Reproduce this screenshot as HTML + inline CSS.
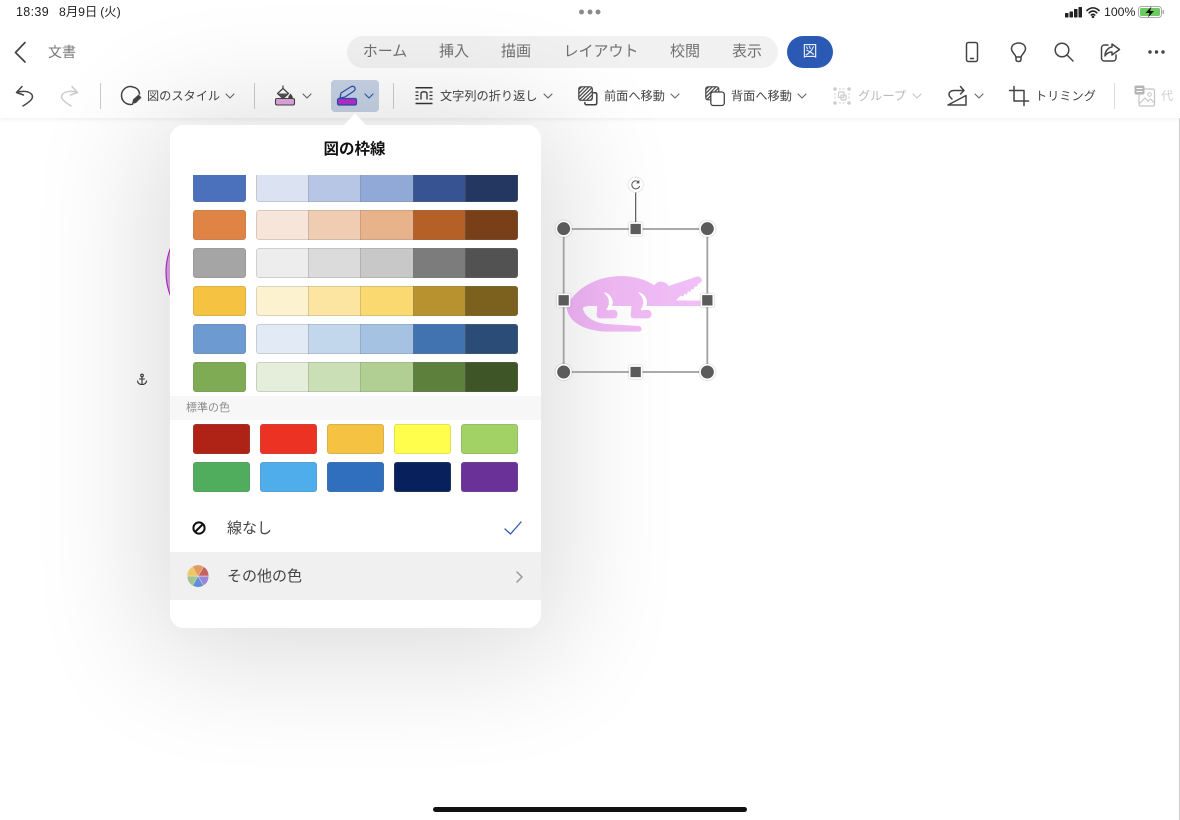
<!DOCTYPE html>
<html><head><meta charset="utf-8">
<style>
html,body{margin:0;padding:0;width:1180px;height:820px;overflow:hidden;background:#fff}
*{box-sizing:border-box}
body{font-family:"Liberation Sans","Noto Sans CJK JP",sans-serif;position:relative;color:#444}
.a{position:absolute;white-space:nowrap}
.t{position:absolute;white-space:nowrap;font-size:12.2px;line-height:16px;color:#454545;top:88px}
.tab{position:absolute;top:43px;font-size:15px;line-height:18px;color:#707070;transform:translateX(-50%);white-space:nowrap}
svg{position:absolute;overflow:visible}
.sw{position:absolute;border-radius:3px;box-shadow:inset 0 0 0 1px rgba(120,120,120,.22)}
.st{position:absolute;left:256px;width:262px;height:30px;display:flex;border-radius:3px;overflow:hidden}
.st:after{content:"";position:absolute;left:0;top:0;right:0;bottom:0;border-radius:3px;box-shadow:inset 0 0 0 1px rgba(120,120,120,.25)}
.st i{flex:1;display:block;border-left:1px solid rgba(120,120,120,.28)}
.st i:first-child{border-left:0}
.s{fill:none;stroke:#444;stroke-width:1.5;stroke-linecap:round;stroke-linejoin:round}
.d{fill:none;stroke:#666;stroke-width:1.1;stroke-linecap:round;stroke-linejoin:round}
</style></head><body>

<!-- document content -->
<svg style="left:0;top:0" width="1180" height="820"><circle cx="231" cy="272" r="65" fill="#dfa6e2" stroke="#b92bd6" stroke-width="1.2"/>
<g fill="none" stroke="#333" stroke-width="1.1" stroke-linecap="round"><circle cx="142" cy="375.5" r="1.3"/><path d="M142 377V384.5M139.5 379H144.5M137.5 381C138 383.5 140 384.500 142 384.500C144 384.500 146 383.500 146.500 381"/></g></svg>
<div class="a" style="left:1179px;top:118px;width:1px;height:702px;background:#ccc"></div>

<!-- top bars -->
<div class="a" style="left:0;top:0;width:1180px;height:118px;background:#fff;box-shadow:0 1px 5px rgba(0,0,0,.07)"></div>

<div class="a" style="left:16px;top:4px;font-size:12.500px;line-height:16px;color:#222;letter-spacing:.35px">18:39</div>
<div class="a" style="left:59px;top:4px;font-size:12.300px;line-height:16px;color:#222;word-spacing:-.5px">8月9日 (火)</div>
<svg style="left:579px;top:9px" width="22" height="6" fill="#8b8b8b"><circle cx="2.500" cy="3" r="2.500"/><circle cx="11" cy="3" r="2.500"/><circle cx="19" cy="3" r="2.500"/></svg>
<svg style="left:1064px;top:6px" width="20" height="12" fill="#222"><rect x="1" y="7" width="3.500" height="4.500" rx=".6"/><rect x="5.500" y="5.500" width="3.500" height="6" rx=".6"/><rect x="10" y="3" width="3.500" height="8.500" rx=".6"/><rect x="14.500" y="1" width="3.500" height="10.500" rx=".6"/></svg>
<svg style="left:1086px;top:6px" width="14" height="12" fill="none" stroke="#222" stroke-width="1.600" stroke-linecap="round"><path d="M1 4.500C4.500 1 9.500 1 13 4.500M3.200 6.800C5.500 4.500 8.500 4.500 10.800 6.800M5.300 9C6.300 8 7.700 8 8.700 9"/><circle cx="7" cy="10.800" r=".5" fill="#222"/></svg>
<div class="a" style="left:1104px;top:4px;font-size:12.300px;line-height:16px;color:#222">100%</div>
<svg style="left:1138px;top:5px" width="28" height="14"><rect x=".5" y="1.500" width="23" height="11" rx="3" fill="none" stroke="#aaa"/><rect x="2" y="3" width="20" height="8" rx="1.500" fill="#6ccb60"/><rect x="24.500" y="5" width="1.500" height="4" rx=".7" fill="#aaa"/><path d="M13.500 1.500L7.500 8H11.500L10 12.500L16 6H12Z" fill="#111"/></svg>

<svg style="left:14px;top:41px" width="14" height="22" fill="none" stroke="#444" stroke-width="1.700" stroke-linecap="round" stroke-linejoin="round"><path d="M11 1.500L1.500 11.500L11 21"/></svg>
<div class="a" style="left:48px;top:43px;font-size:14px;line-height:18px;color:#777">文書</div>

<div class="a" style="left:347px;top:36px;width:431px;height:32px;border-radius:16px;background:#f1f1f1"></div>
<div class="tab" style="left:385px">ホーム</div>
<div class="tab" style="left:454px">挿入</div>
<div class="tab" style="left:516px">描画</div>
<div class="tab" style="left:601px">レイアウト</div>
<div class="tab" style="left:685px">校閲</div>
<div class="tab" style="left:747px">表示</div>
<div class="a" style="left:787px;top:36px;width:46px;height:32px;border-radius:16px;background:#2b5ab5"></div>
<div class="tab" style="left:810px;color:#e8eefa">図</div>

<!-- right icons -->
<svg style="left:964px;top:40px" width="16" height="22"><rect class="s" x="2.500" y="2.500" width="11" height="19" rx="2"/><path class="s" d="M6.500 18.500H9.500"/></svg>
<svg style="left:1009px;top:41px" width="20" height="22"><path class="s" d="M6.800 16C6.500 13 2.500 11.500 2.500 7.800C2.500 4.300 5.500 2 9.500 2C13.500 2 16.500 4.300 16.500 7.800C16.500 11.500 12.500 13 12.200 16ZM7 16V18.500C7 19.800 8 20.500 9.500 20.500C11 20.500 12 19.800 12 18.500V16"/></svg>
<svg style="left:1054px;top:42px" width="20" height="20"><circle class="s" cx="8" cy="8" r="6.800"/><path class="s" d="M13 13L19 19"/></svg>
<svg style="left:1100px;top:42px" width="20" height="20"><path class="s" d="M8 3H4.500C2.800 3 1.500 4.300 1.500 6V16C1.500 17.700 2.800 19 4.500 19H13C14.700 19 16 17.700 16 16V13"/><path class="s" d="M12 2L19.500 7.500L12 13V10C8.500 10 6.500 11.500 5 14C5 9.500 8 5.500 12 5Z"/></svg>
<svg style="left:1148px;top:49px" width="17" height="6" fill="#444"><circle cx="2" cy="3" r="1.700"/><circle cx="8.500" cy="3" r="1.700"/><circle cx="15" cy="3" r="1.700"/></svg>

<!-- toolbar -->
<svg style="left:14px;top:85px" width="20" height="22"><path class="s" d="M8 1.500L2.500 7.500L9.500 10M2.500 7.500C8 5.500 15 6 17.800 9.500C20 13 17 16 9 21"/></svg>
<svg style="left:60px;top:85px" width="20" height="22"><path d="M12 1.500L17.500 7.500L10.500 10M17.500 7.500C12 5.500 5 6 2.200 9.500C0 13 3 16 11 21" fill="none" stroke="#ccc" stroke-width="1.500" stroke-linecap="round" stroke-linejoin="round"/></svg>
<div class="a" style="left:100px;top:83px;width:1px;height:26px;background:#ccc"></div>

<svg style="left:120px;top:85px" width="24" height="24"><path class="s" d="M14 2.500C12.800 1.700 11.500 1.500 10.500 1.500C5.500 1.500 1.500 5.500 1.500 10.500C1.500 15.500 5.500 19.500 10.500 19.500C11.300 19.500 12 19.400 12.500 19.300"/><path class="s" d="M15 2.500C17.800 4 19.500 6.500 19.500 9"/><path d="M12 19L13 14.500L18.500 9.500L21.500 12.500L16 18Z" fill="#444"/></svg>
<div class="t" style="left:147px">図のスタイル</div>
<svg style="left:225px;top:93px" width="10" height="6"><path class="d" d="M1 1L5 5L9 1"/></svg>
<div class="a" style="left:254px;top:83px;width:1px;height:26px;background:#ccc"></div>

<svg style="left:274px;top:84px" width="24" height="24"><path d="M9 1.500V5M3.500 9.500L9 4.500L14.500 9.500L9 14.500Z" fill="#fff" stroke="#444" stroke-width="1.200" stroke-linejoin="round"/><path d="M4 9.500H14L9 14Z" fill="#555"/><path d="M16.500 9.500C18 11.500 18.800 12.500 18.800 13.500C18.800 14.600 17.800 15.500 16.500 15.500C15.300 15.500 14.300 14.600 14.300 13.500C14.300 12.500 15 11.500 16.500 9.500Z" fill="#444"/><rect x="1.500" y="14.500" width="19" height="6.500" rx="1.500" fill="#e2a9e2" stroke="#444" stroke-width="1.100"/></svg>
<svg style="left:302px;top:93px" width="10" height="6"><path class="d" d="M1 1L5 5L9 1"/></svg>

<div class="a" style="left:331px;top:80px;width:48px;height:32px;border-radius:4px;background:#c7d3e5"></div>
<svg style="left:336px;top:84px" width="24" height="22"><path d="M4 14L5 9L14.500 3C16 2 18 2 18.800 3.500C19.500 5 19 6 18 7L9 13Z" fill="none" stroke="#2b52ab" stroke-width="1.300" stroke-linejoin="round"/><rect x="1.500" y="14.500" width="19" height="6.500" rx="1.500" fill="#b92bd0" stroke="#2b52ab" stroke-width="1.200"/></svg>
<svg style="left:364px;top:93px" width="10" height="6"><path d="M1 1L5 5L9 1" fill="none" stroke="#2b5ab5" stroke-width="1.200" stroke-linecap="round" stroke-linejoin="round"/></svg>
<div class="a" style="left:393px;top:83px;width:1px;height:26px;background:#ccc"></div>

<svg style="left:415px;top:87px" width="18" height="18"><path d="M.5 .800H17.500M.5 16.500H17.500" stroke="#333" stroke-width="1.500" fill="none"/><path d="M.5 5H3.500M.5 8.500H3.500M.5 12H3.500M14.500 5H17.500M14.500 8.500H17.500M14.500 12H17.500" stroke="#333" stroke-width="1.200" fill="none"/><path d="M6 12.500V6.500C6 5.500 6.800 4.800 8.800 4.800C11 4.800 12 5.500 12 6.500V12.500" stroke="#333" stroke-width="1.300" fill="none"/></svg>
<div class="t" style="left:440px">文字列の折り返し</div>
<svg style="left:543px;top:93px" width="10" height="6"><path class="d" d="M1 1L5 5L9 1"/></svg>

<svg style="left:578px;top:86px" width="20" height="20"><defs><pattern id="h" width="2.600" height="2.600" patternUnits="userSpaceOnUse" patternTransform="rotate(-45)"><rect width="2.600" height="1.200" fill="#444"/></pattern></defs><rect x=".8" y=".8" width="13.500" height="13.500" rx="2" fill="url(#h)" stroke="#444" stroke-width="1.200"/><path class="s" d="M15.500 6.800H17C18.100 6.800 18.800 7.500 18.800 8.600V16.800C18.800 18 18 18.800 16.800 18.800H8.500C7.500 18.800 6.800 18 6.800 16.500"/></svg>
<div class="t" style="left:604px">前面へ移動</div>
<svg style="left:670px;top:93px" width="10" height="6"><path class="d" d="M1 1L5 5L9 1"/></svg>

<svg style="left:705px;top:86px" width="20" height="20"><rect x=".8" y=".8" width="13" height="13" rx="2" fill="url(#h)" stroke="#444" stroke-width="1.200"/><rect x="5.800" y="6" width="13.500" height="13.500" rx="2.500" fill="#fff" stroke="#444" stroke-width="1.300"/></svg>
<div class="t" style="left:731px">背面へ移動</div>
<svg style="left:797px;top:93px" width="10" height="6"><path class="d" d="M1 1L5 5L9 1"/></svg>

<svg style="left:833px;top:87px" width="18" height="18"><g fill="#ccc"><circle cx="2" cy="2" r="1.800"/><circle cx="16" cy="2" r="1.800"/><circle cx="2" cy="16" r="1.800"/><circle cx="16" cy="16" r="1.800"/></g><path d="M6 2H12M6 16H12M2 6V12M16 6V12" stroke="#ccc" stroke-dasharray="2 1.500" fill="none"/><rect x="5.500" y="5" width="5.500" height="5.500" rx="1" fill="none" stroke="#ccc" stroke-width="1.200"/><rect x="8" y="8" width="5" height="5" rx="1" fill="none" stroke="#ccc" stroke-width="1.200"/></svg>
<div class="t" style="left:858px;color:#b9b9b9">グループ</div>
<svg style="left:912px;top:93px" width="10" height="6"><path d="M1 1L5 5L9 1" fill="none" stroke="#c4c4c4" stroke-width="1.100" stroke-linecap="round" stroke-linejoin="round"/></svg>

<svg style="left:947px;top:84px" width="22" height="22"><path class="s" d="M1 21H19V11.500L1 21Z"/><path class="s" d="M17 6.500H7C4 6.500 2 8 2 10.500C2 12.500 3.500 13.500 5 15M13.500 2.500L17 6.500L13.500 10"/></svg>
<svg style="left:974px;top:93px" width="10" height="6"><path class="d" d="M1 1L5 5L9 1"/></svg>

<svg style="left:1009px;top:86px" width="20" height="20"><path class="s" d="M5 0.500V15H19.500M0.500 4.500H15V19.500"/></svg>
<div class="t" style="left:1035px">トリミング</div>
<div class="a" style="left:1114px;top:83px;width:1px;height:26px;background:#ddd"></div>
<svg style="left:1134px;top:85px" width="22" height="22"><rect x="5" y="4" width="15.500" height="17" rx="1.500" fill="#fff" stroke="#c4c4c4" stroke-width="1.200"/><circle cx="15.500" cy="9.500" r="1.800" fill="none" stroke="#c4c4c4"/><path d="M5.500 18.500L11 13L15 17M14 16L16.500 14L20 17.500" fill="none" stroke="#c4c4c4"/><rect x=".5" y=".5" width="10" height="9" rx="1.500" fill="#b5b5b5"/><path d="M2.500 3.500H8.500M2.500 6.500H8.500" stroke="#fff"/></svg>
<div class="t" style="left:1161px;color:#d0d0d0">代</div>

<!-- popover shadow -->
<div class="a" style="left:170px;top:125px;width:371px;height:503px;border-radius:14px;box-shadow:0 10px 120px 20px rgba(0,0,0,.14)"></div>
<svg style="left:340px;top:112px" width="30" height="14"><path d="M3 14L15 1.500L27 14Z" fill="#fff"/></svg>

<!-- shape selection -->
<svg style="left:540px;top:170px" width="190" height="215" viewBox="0 0 570 645">
<defs><linearGradient id="g" gradientUnits="userSpaceOnUse" x1="80" x2="490" y1="0" y2="0"><stop offset="0" stop-color="#e2a8e8"/><stop offset=".35" stop-color="#ecb6f0"/><stop offset="1" stop-color="#f2bff7"/></linearGradient></defs>
<g fill="url(#g)">
<path d="M80 412C95 372 150 320 240 318C285 318 320 330 343 346C352 331 375 331 386 348L470 320C482 316 491 331 482 338L473 343L471 350L464 350L461 358L454 357L451 366L444 364L441 373L434 371L429 380L422 377L408 391L484 392C492 393 492 408 484 408L150 408C142 408 132 410 128 414C134 440 160 458 200 462L297 468C307 470 307 485 297 485L210 485C140 485 85 460 80 412Z"/>
<path d="M172 400H205V420H222C236 420 236 445 222 445H180C172 445 170 440 170 434Z"/>
<path d="M275 400H308V420H324C338 420 338 445 324 445H282C274 445 272 440 272 434Z"/>
</g>
<g fill="#fff">
<path d="M191 367C210 368 222 390 217 405C214 414 210 418 205 422L199 418C206 410 208 400 206 390C204 380 198 374 191 367Z"/>
<path d="M294 367C313 368 325 390 320 405C317 414 313 418 308 422L302 418C309 410 311 400 309 390C307 380 301 374 294 367Z"/>
</g>
<g fill="none" stroke="#a2a2a2" stroke-width="5.500"><rect x="71" y="177" width="431" height="429"/></g>
<path d="M287 66V177" stroke="#555" stroke-width="3.500"/>
<g>
<circle cx="287" cy="44" r="23" fill="#fff" stroke="#ddd" stroke-width="2"/>
<path d="M296 36A12 12 0 1 0 299 48" fill="none" stroke="#555" stroke-width="3"/><path d="M298 30V40H288Z" fill="#555"/>
</g>
<g fill="#5b5b5b" stroke="#fff" stroke-width="5" style="filter:drop-shadow(0 0 2px rgba(0,0,0,.35))">
<circle cx="71" cy="176" r="22"/><circle cx="502" cy="176" r="22"/><circle cx="71" cy="606" r="22"/><circle cx="502" cy="606" r="22"/>
<rect x="269" y="159" width="36" height="36" rx="3"/><rect x="269" y="588" width="36" height="36" rx="3"/><rect x="53" y="373" width="36" height="36" rx="3"/><rect x="484" y="373" width="36" height="36" rx="3"/>
</g>
</svg>

<!-- popover -->
<div class="a" style="left:170px;top:125px;width:371px;height:503px;border-radius:14px;background:#fff;overflow:hidden">
  <div class="a" style="left:0;top:15px;width:369px;text-align:center;font-size:15.500px;line-height:20px;font-weight:bold;color:#111">図の枠線</div>
  <div class="a" style="left:0;top:271px;width:371px;height:24px;background:#f7f7f7"></div>
  <div class="a" style="left:16px;top:275px;font-size:11px;line-height:16px;color:#8a8a8a">標準の色</div>
  <div class="a" style="left:0;top:427px;width:371px;height:48px;background:#f0f0f0"></div>
  <svg style="left:22px;top:396px" width="14" height="14"><circle cx="7" cy="7" r="5.600" fill="none" stroke="#111" stroke-width="2"/><path d="M3.500 10.500L10.500 3.500" stroke="#111" stroke-width="2"/></svg>
  <div class="a" style="left:57px;top:394px;font-size:15px;line-height:20px;color:#444">線なし</div>
  <svg style="left:334px;top:396px" width="18" height="14"><path d="M1 8L6.500 13L17 1" fill="none" stroke="#2b5ab5" stroke-width="1.300" stroke-linecap="round" stroke-linejoin="round"/></svg>
  <svg style="left:17px;top:440px" width="22" height="22" viewBox="-11 -11 22 22">
    <circle r="10.800" fill="#ddd"/>
    <path d="M0 0L-5.200 -9.400A10.500 10.500 0 0 1 5.200 -9.400Z" fill="#e39a5f"/>
    <path d="M.5 0L5.700 -9.100A10.500 10.500 0 0 1 10.500 -.3L.5 -.3Z" fill="#c9615f"/>
    <path d="M.5 .5H10.500A10.500 10.500 0 0 1 5.700 9.400Z" fill="#9a85d6"/>
    <path d="M0 .8L5.200 9.600A10.500 10.500 0 0 1 -5.200 9.600Z" fill="#5e8fd8"/>
    <path d="M-.5 .5L-5.700 9.400A10.500 10.500 0 0 1 -10.500 .5Z" fill="#a5c48a"/>
    <path d="M-.5 -.3H-10.500A10.500 10.500 0 0 1 -5.700 -9.100Z" fill="#ecc85f"/>
  </svg>
  <div class="a" style="left:57px;top:442px;font-size:15px;line-height:20px;color:#444">その他の色</div>
  <svg style="left:346px;top:446px" width="8" height="12"><path d="M1 1L6 6L1 11" fill="none" stroke="#999" stroke-width="1.500" stroke-linecap="round" stroke-linejoin="round"/></svg>
</div>

<!-- palette -->
<div class="a" style="left:170px;top:175px;width:371px;height:218px;overflow:hidden">
  <div style="position:absolute;left:-170px;top:-175px;width:1180px;height:820px">
    <div class="sw" style="left:193px;top:172px;width:53px;height:30px;background:#4c71bc"></div>
    <div class="st" style="top:172px"><i style="background:#dbe2f1"></i><i style="background:#b6c6e4"></i><i style="background:#91a9d7"></i><i style="background:#375392"></i><i style="background:#233761"></i></div>
    <div class="sw" style="left:193px;top:210px;width:53px;height:30px;background:#df8445"></div>
    <div class="st" style="top:210px"><i style="background:#f7e5d9"></i><i style="background:#f0ccb2"></i><i style="background:#e8b28b"></i><i style="background:#b46027"></i><i style="background:#783f19"></i></div>
    <div class="sw" style="left:193px;top:248px;width:53px;height:30px;background:#a5a5a5"></div>
    <div class="st" style="top:248px"><i style="background:#ededed"></i><i style="background:#dbdbdb"></i><i style="background:#c8c8c8"></i><i style="background:#7c7c7c"></i><i style="background:#525252"></i></div>
    <div class="sw" style="left:193px;top:286px;width:53px;height:30px;background:#f6c242"></div>
    <div class="st" style="top:286px"><i style="background:#fdf2cf"></i><i style="background:#fbe5a0"></i><i style="background:#fbd971"></i><i style="background:#b8922e"></i><i style="background:#7b611d"></i></div>
    <div class="sw" style="left:193px;top:324px;width:53px;height:30px;background:#6c9ad1"></div>
    <div class="st" style="top:324px"><i style="background:#e1eaf5"></i><i style="background:#c2d6ec"></i><i style="background:#a5c2e2"></i><i style="background:#4273b1"></i><i style="background:#2b4c76"></i></div>
    <div class="sw" style="left:193px;top:362px;width:53px;height:30px;background:#7eab53"></div>
    <div class="st" style="top:362px"><i style="background:#e4eedb"></i><i style="background:#cbdfb7"></i><i style="background:#b1cf93"></i><i style="background:#5d803c"></i><i style="background:#3e5528"></i></div>
  </div>
</div>

<div class="sw" style="left:193px;top:424px;width:57px;height:30px;background:#ae2315"></div>
<div class="sw" style="left:260px;top:424px;width:57px;height:30px;background:#ec3323"></div>
<div class="sw" style="left:327px;top:424px;width:57px;height:30px;background:#f5c242"></div>
<div class="sw" style="left:394px;top:424px;width:57px;height:30px;background:#fffe4d"></div>
<div class="sw" style="left:461px;top:424px;width:57px;height:30px;background:#a2d165"></div>
<div class="sw" style="left:193px;top:462px;width:57px;height:30px;background:#50ad5d"></div>
<div class="sw" style="left:260px;top:462px;width:57px;height:30px;background:#4fadeb"></div>
<div class="sw" style="left:327px;top:462px;width:57px;height:30px;background:#2f6fbd"></div>
<div class="sw" style="left:394px;top:462px;width:57px;height:30px;background:#08205c"></div>
<div class="sw" style="left:461px;top:462px;width:57px;height:30px;background:#6a3299"></div>

<!-- home indicator -->
<div class="a" style="left:433px;top:807px;width:314px;height:5px;border-radius:3px;background:#111"></div>
</body></html>
